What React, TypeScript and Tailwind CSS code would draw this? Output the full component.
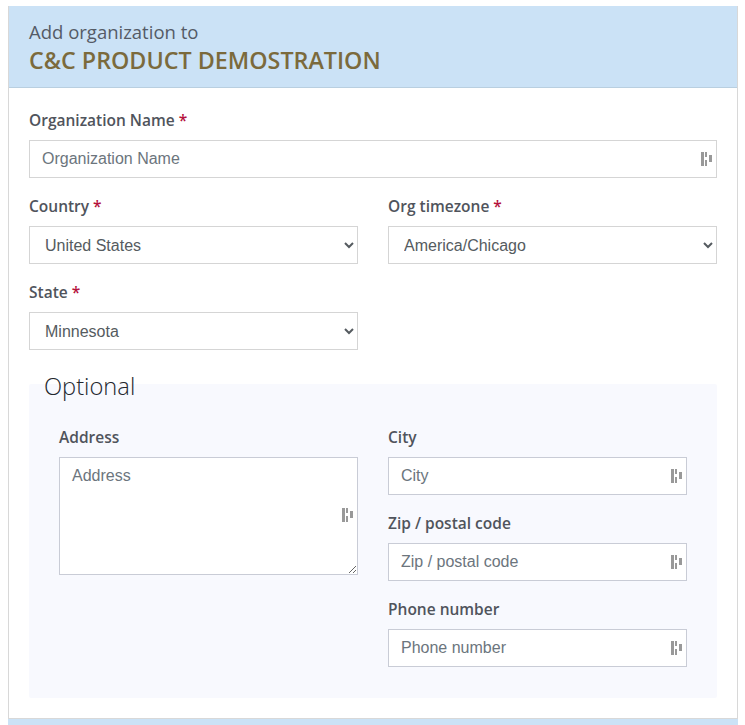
const inputFont = "font-['Liberation_Sans',Arial,sans-serif]";

function FillIcon({ className = "top-[12px]" }: { className?: string }) {
  return (
    <svg className={`pointer-events-none absolute right-[5px] ${className}`} width="11" height="14" viewBox="0 0 11 14" fill="#999">
      <rect x="0" y="0" width="3" height="14" />
      <rect x="4" y="0" width="2" height="5" />
      <rect x="4" y="8" width="2" height="6" />
      <rect x="8" y="3" width="3" height="7" />
    </svg>
  );
}

function Label({ text, required }: { text: string; required?: boolean }) {
  return (
    <label className="mb-[10px] block h-5 text-[15.5px] leading-5 font-semibold text-[#50545c]">
      {text}
      {required && <span className="text-[#b5123c]"> *</span>}
    </label>
  );
}

function TextField({ placeholder, border = "border-[#d5d5d5]" }: { placeholder: string; border?: string }) {
  return (
    <div className="relative">
      <input
        placeholder={placeholder}
        className={`block h-[38px] w-full border bg-white pr-8 pl-3 text-base text-[#555] outline-none placeholder:text-[#6c757d] ${border} ${inputFont}`}
      />
      <FillIcon />
    </div>
  );
}

function SelectField({ value }: { value: string }) {
  return (
    <select
      defaultValue={value}
      className={`block h-[38px] w-full border border-[#d5d5d5] bg-white pr-2 pl-[11px] text-base text-[#555b60] outline-none ${inputFont}`}
    >
      <option>{value}</option>
    </select>
  );
}

export default function App() {
  return (
    <div className="h-[725px] overflow-hidden bg-white pt-[6px] pr-[7px] pl-2 font-['Open_Sans',sans-serif]">
      <div className="border-x border-[#d8d8d8]">
        <div className="h-[82px] border-b border-[#b9cfe0] bg-[#cbe2f6] pt-[13px] pl-5">
          <div className="text-[18.5px] leading-[26px] text-[#555b66]">Add organization to</div>
          <div className="text-[23.3px] leading-[30px] font-semibold text-[#7b6a3c]">C&amp;C PRODUCT DEMOSTRATION</div>
        </div>

        <div className="h-[631px] border-b border-[#d8d8d8] px-5 pt-[22px]">
          <Label text="Organization Name" required />
          <TextField placeholder="Organization Name" />

          <div className="mt-[18px] grid grid-cols-2 gap-x-[30px]">
            <div>
              <Label text="Country" required />
              <SelectField value="United States" />
            </div>
            <div>
              <Label text="Org timezone" required />
              <SelectField value="America/Chicago" />
            </div>
          </div>

          <div className="mt-[18px] grid grid-cols-2 gap-x-[30px]">
            <div>
              <Label text="State" required />
              <SelectField value="Minnesota" />
            </div>
          </div>

          <h3 className="relative z-10 mt-5 ml-[15px] h-8 text-[23.7px] leading-8 font-light text-[#23272e]">Optional</h3>
          <div className="-mt-[18px] grid grid-cols-2 gap-x-[30px] rounded-[2px] bg-[#f8f9fe] px-[30px] pt-[43px] pb-[31px]">
            <div>
              <Label text="Address" />
              <div className="relative">
                <textarea
                  placeholder="Address"
                  className={`block h-[118px] w-full border border-[#c9ccd6] bg-white px-3 py-[6px] text-base outline-none placeholder:text-[#6c757d] ${inputFont}`}
                />
                <FillIcon className="top-[51px]" />
              </div>
            </div>
            <div className="flex flex-col gap-[18px]">
              <div>
                <Label text="City" />
                <TextField placeholder="City" border="border-[#c9ccd6]" />
              </div>
              <div>
                <Label text="Zip / postal code" />
                <TextField placeholder="Zip / postal code" border="border-[#c9ccd6]" />
              </div>
              <div>
                <Label text="Phone number" />
                <TextField placeholder="Phone number" border="border-[#c9ccd6]" />
              </div>
            </div>
          </div>
        </div>
      </div>
      <div className="h-2 bg-[#cbe2f6]" />
    </div>
  );
}
